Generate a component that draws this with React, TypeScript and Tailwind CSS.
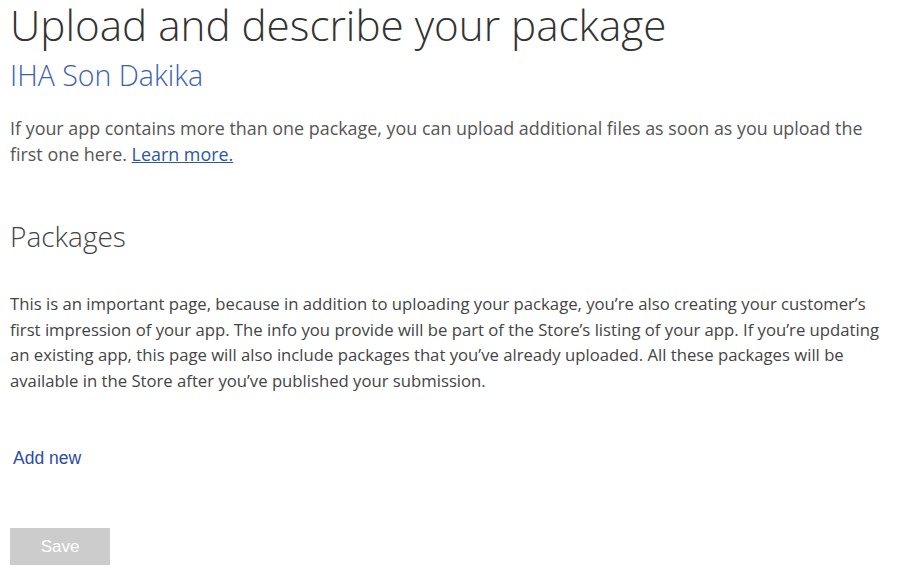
export default function App() {
  const seg = { fontFamily: '"Open Sans", "Noto Sans", sans-serif' };
  const ar = { fontFamily: '"Liberation Sans", Arial, sans-serif' };
  return (
    <div className="w-[903px] h-[579px] bg-white overflow-hidden pl-[10px] pr-[10px]" style={seg}>
      <h1 className="text-[42.2px] leading-[50px] font-light text-[#333] whitespace-nowrap">
        Upload and describe your package
      </h1>
      <div className="text-[28.5px] leading-[36px] font-light text-[#3b5fb8] mt-[7px]">IHA Son Dakika</div>
      <p className="text-[17.9px] leading-[26px] text-[#555] mt-[22px] whitespace-nowrap">
        If your app contains more than one package, you can upload additional files as soon as you upload the
        <br />
        first one here.{' '}
        <a href="#" className="text-[#2b55a8] underline">Learn more.</a>
      </p>
      <h2 className="text-[28px] leading-[36px] font-light text-[#444] mt-[51px]">Packages</h2>
      <p className="text-[16.7px] leading-[25.5px] text-[#444] mt-[37px] whitespace-nowrap">
        This is an important page, because in addition to uploading your package, you’re also creating your customer’s
        <br />
        first impression of your app. The info you provide will be part of the Store’s listing of your app. If you’re updating
        <br />
        an existing app, this page will also include packages that you’ve already uploaded. All these packages will be
        <br />
        available in the Store after you’ve published your submission.
      </p>
      <div className="mt-[55px] pl-[3px] text-[17.5px] leading-[20px] text-[#2a4ca5]" style={ar}>Add new</div>
      <button
        className="block mt-[60px] w-[100px] h-[37px] bg-[#cccccc] text-white text-[17px] leading-[37px]"
        style={ar}
      >
        Save
      </button>
    </div>
  );
}
